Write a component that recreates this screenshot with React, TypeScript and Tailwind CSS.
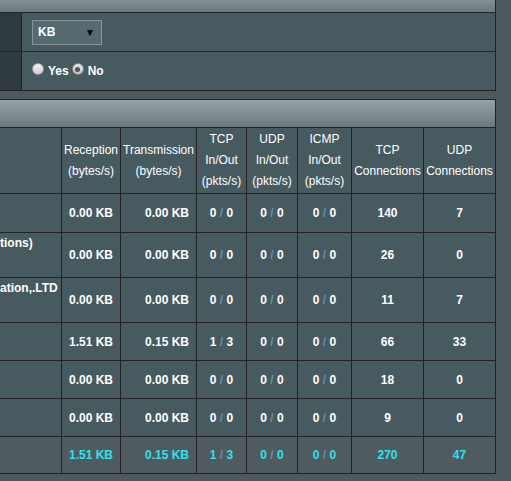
import React from 'react';

type Row = {
    name: string[];
    rx: string;
    tx: string;
    tcp: [string, string];
    udp: [string, string];
    icmp: [string, string];
    tcpConn: string;
    udpConn: string;
};

const rows: Row[] = [
    { name: [], rx: '0.00 KB', tx: '0.00 KB', tcp: ['0', '0'], udp: ['0', '0'], icmp: ['0', '0'], tcpConn: '140', udpConn: '7' },
    { name: ['tions)', ''], rx: '0.00 KB', tx: '0.00 KB', tcp: ['0', '0'], udp: ['0', '0'], icmp: ['0', '0'], tcpConn: '26', udpConn: '0' },
    { name: ['ation,.LTD', ''], rx: '0.00 KB', tx: '0.00 KB', tcp: ['0', '0'], udp: ['0', '0'], icmp: ['0', '0'], tcpConn: '11', udpConn: '7' },
    { name: [], rx: '1.51 KB', tx: '0.15 KB', tcp: ['1', '3'], udp: ['0', '0'], icmp: ['0', '0'], tcpConn: '66', udpConn: '33' },
    { name: [], rx: '0.00 KB', tx: '0.00 KB', tcp: ['0', '0'], udp: ['0', '0'], icmp: ['0', '0'], tcpConn: '18', udpConn: '0' },
    { name: [], rx: '0.00 KB', tx: '0.00 KB', tcp: ['0', '0'], udp: ['0', '0'], icmp: ['0', '0'], tcpConn: '9', udpConn: '0' },
];

const total: Row = { name: [], rx: '1.51 KB', tx: '0.15 KB', tcp: ['1', '3'], udp: ['0', '0'], icmp: ['0', '0'], tcpConn: '270', udpConn: '47' };

const headers: string[][] = [
    [],
    ['Reception', '(bytes/s)'],
    ['Transmission', '(bytes/s)'],
    ['TCP', 'In/Out', '(pkts/s)'],
    ['UDP', 'In/Out', '(pkts/s)'],
    ['ICMP', 'In/Out', '(pkts/s)'],
    ['TCP', 'Connections'],
    ['UDP', 'Connections'],
];

function Pair({ v }: { v: [string, string] }) {
    return (
        <span>
            {v[0]} <span className="text-[#5e8fb8]">/</span> {v[1]}
        </span>
    );
}

function DataRow({ row, isTotal }: { row: Row; isTotal?: boolean }) {
    const bg = isTotal ? 'bg-[#4f5b5f]' : 'bg-[#475a5f]';
    const cell = bg + (isTotal ? ' text-[#2de3ee]' : ' text-white') + ' font-bold flex items-center justify-center';
    const right = bg + (isTotal ? ' text-[#2de3ee]' : ' text-white') + ' font-bold flex items-center justify-end pr-[7px]';
    return (
        <>
            <div className={bg + ' text-white font-bold flex flex-col justify-center overflow-hidden whitespace-nowrap'}>
                {row.name.map((l, i) => (
                    <div key={i} className="h-[21px]">{l}</div>
                ))}
            </div>
            <div className={right}>{row.rx}</div>
            <div className={right}>{row.tx}</div>
            <div className={cell}><Pair v={row.tcp} /></div>
            <div className={cell}><Pair v={row.udp} /></div>
            <div className={cell}><Pair v={row.icmp} /></div>
            <div className={cell}>{row.tcpConn}</div>
            <div className={cell}>{row.udpConn}</div>
        </>
    );
}

export default function App() {
    return (
        <div className="w-[511px] h-[481px] overflow-hidden bg-[#4d595d] text-[12px] text-white" style={{ fontFamily: '"Liberation Sans", Arial, sans-serif' }}>
            {/* Settings panel */}
            <div className="w-[496px] border-r border-[#222]">
                <div className="h-[13px] bg-gradient-to-b from-[#828f94] to-[#6b7a80] border-b border-[#222]" />
                <div className="flex h-[39px] border-b border-[#222]">
                    <div className="w-[22px] bg-[#2f3b3f] border-r border-[#222]" />
                    <div className="flex-1 bg-[#475a5f] flex items-center pl-[10px]">
                        <div className="w-[70px] h-[25px] border border-[#8a9598] bg-[#566b71] flex items-center justify-between pl-[5px] pr-[6px]">
                            <span className="font-bold text-[12px]">KB</span>
                            <span className="text-[10px] text-black">▼</span>
                        </div>
                    </div>
                </div>
                <div className="flex h-[39px] border-b border-[#222]">
                    <div className="w-[22px] bg-[#2f3b3f] border-r border-[#222]" />
                    <div className="flex-1 bg-[#475a5f] flex items-center pl-[10px] font-bold">
                        <span className="w-[12px] h-[12px] rounded-full bg-gradient-to-b from-[#f4f4f4] to-[#cfcfcf] border border-[#9a9a9a] -mt-[4px]" />
                        <span className="ml-[4px] mr-[3px]">Yes</span>
                        <span className="w-[12px] h-[12px] rounded-full bg-gradient-to-b from-[#e8e8e8] to-[#c4c4c4] border border-[#8a8a8a] -mt-[4px] flex items-center justify-center">
                            <span className="w-[5px] h-[5px] rounded-full bg-[#555]" />
                        </span>
                        <span className="ml-[4px]">No</span>
                    </div>
                </div>
            </div>

            {/* Table panel */}
            <div className="mt-[8px] w-[496px] border-t border-r border-[#222]">
                <div className="h-[28px] bg-gradient-to-b from-[#95a2a7] to-[#6b7a80] border-b border-[#222]" />
                <div className="grid grid-cols-[61px_58px_75px_49px_50px_53px_71px_71px] grid-rows-[65px_38px_44px_44px_37px_37px_37px_36px] gap-px bg-[#222] border-b border-[#222]">
                    {headers.map((h, i) => (
                        <div key={i} className="bg-[#475a5f] flex flex-col items-center justify-center leading-[21px] whitespace-nowrap">
                            {h.map((l, j) => (
                                <div key={j}>{l}</div>
                            ))}
                        </div>
                    ))}
                    {rows.map((r, i) => (
                        <DataRow key={i} row={r} />
                    ))}
                    <DataRow row={total} isTotal />
                </div>
            </div>
        </div>
    );
}
